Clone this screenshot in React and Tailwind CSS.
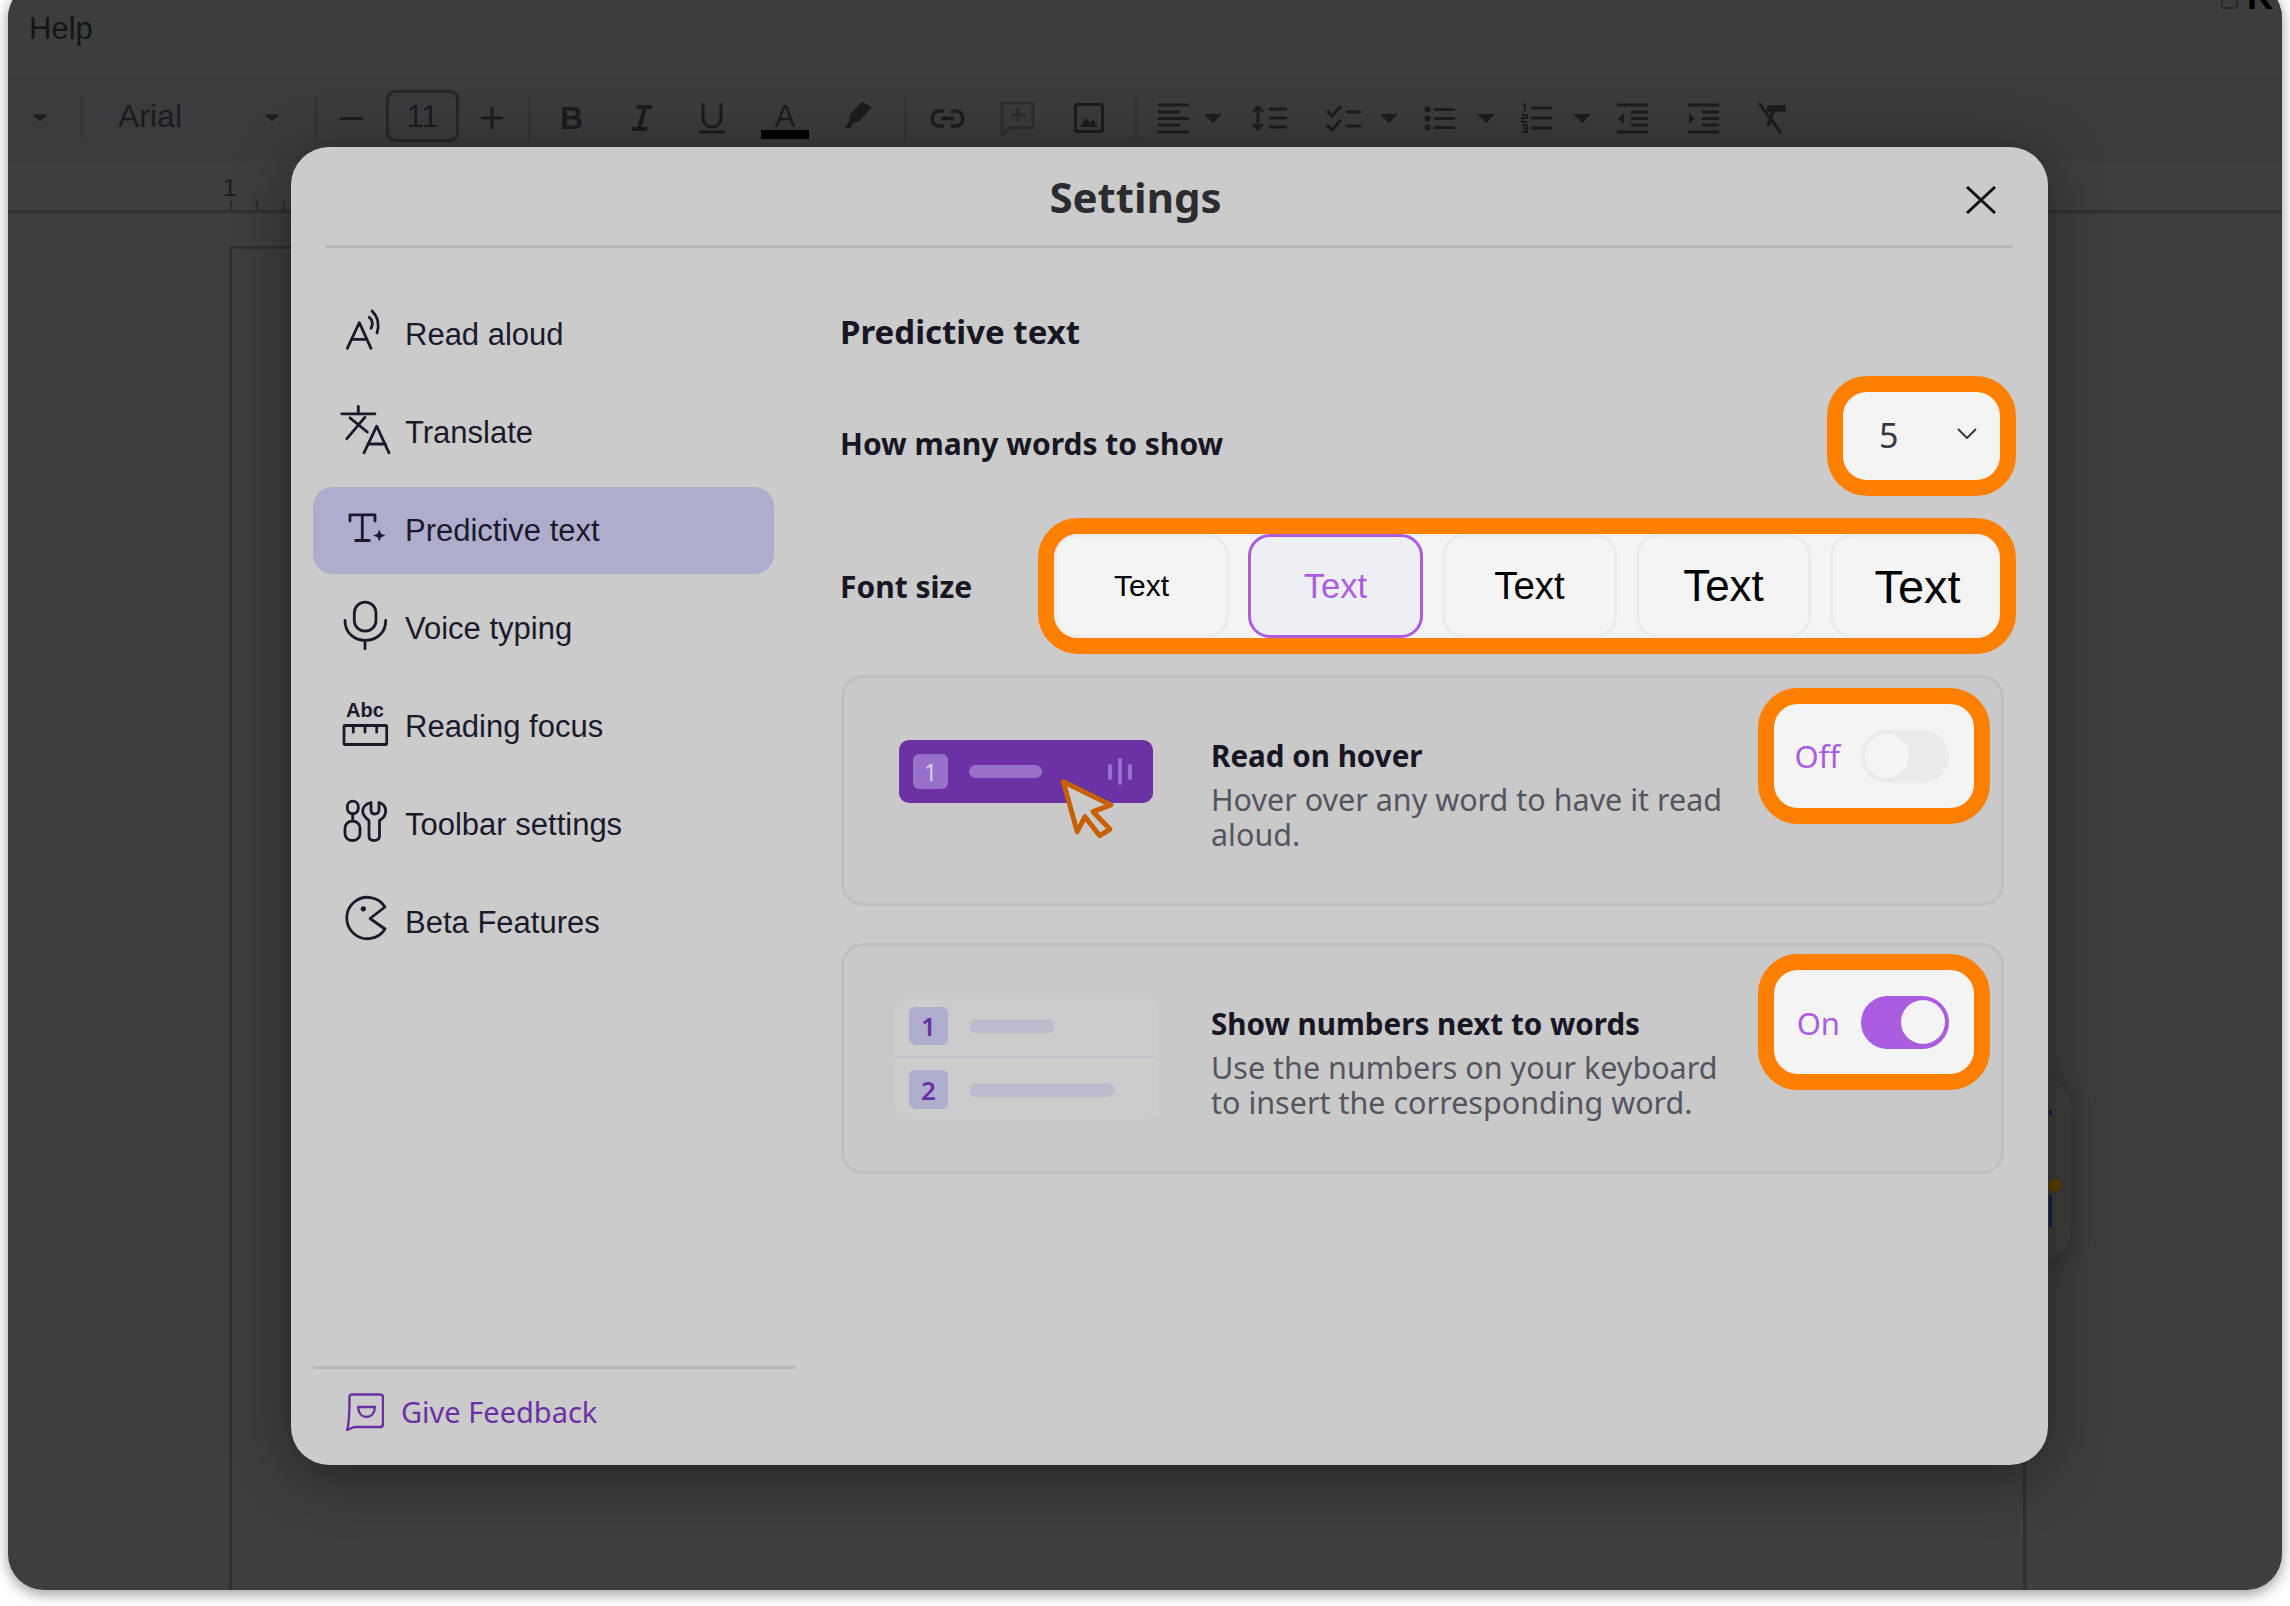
import React from "react";

const Tri = ({ className }) => (
  <svg viewBox="0 0 18 9" className={className}>
    <path d="M0 0H18L9 9Z" fill="#1c1c1c" />
  </svg>
);

const Sep = ({ className }) => <div className={`w-[2px] h-[44px] bg-[#323332] ${className}`} />;

const Lines = ({ rows }) => (
  <>
    {rows.map(([x1, x2, y], i) => (
      <path key={i} d={`M${x1} ${y}H${x2}`} stroke="#1c1c1c" strokeWidth="3" />
    ))}
  </>
);

const Toolbar = () => (
  <div className="h-[86px] bg-[#3a3b3d] flex items-center font-['Liberation_Sans',sans-serif] text-[#1c1c1c]">
    <Tri className="ml-[25px] w-[14px] h-[8px]" />
    <Sep className="ml-[34px]" />
    <span className="ml-[35px] w-[65px] text-[32px] leading-none -mt-[5px]">Arial</span>
    <Tri className="ml-[82px] w-[14px] h-[8px]" />
    <Sep className="ml-[36px]" />
    <div className="ml-[23px] w-[23px] h-[3px] bg-[#1c1c1c]" />
    <div className="ml-[23px] w-[73px] h-[52px] -mt-[4px] rounded-[9px] border-[3px] border-[#262726] flex items-center justify-center text-[31px] leading-none">
      11
    </div>
    <svg viewBox="0 0 22 22" className="ml-[22px] w-[22px] h-[22px]">
      <path d="M11 0V22M0 11H22" stroke="#1c1c1c" strokeWidth="3" />
    </svg>
    <Sep className="ml-[25px]" />
    <span className="ml-[30px] w-[19px] text-[32px] leading-none font-bold">B</span>
    <svg viewBox="0 0 22 26" className="ml-[52px] w-[22px] h-[26px]">
      <path d="M6 2H21M1 24H16M14 2L8 24" stroke="#1c1c1c" strokeWidth="4" fill="none" />
    </svg>
    <svg viewBox="0 0 26 31" className="ml-[46px] w-[26px] h-[31px]">
      <path d="M4 0V15C4 27 22 27 22 15V0" stroke="#1c1c1c" strokeWidth="3" fill="none" />
      <path d="M0 29H26" stroke="#1c1c1c" strokeWidth="3" />
    </svg>
    <div className="ml-[36px] w-[48px] flex flex-col items-center mt-[5px]">
      <span className="text-[31px] leading-[27px]">A</span>
      <div className="w-[48px] h-[9px] bg-black" />
    </div>
    <svg viewBox="0 0 30 27" className="ml-[36px] w-[30px] h-[27px] -mt-[7px]">
      <path d="M0 27L4 20L5 13L17 1L27 6L14 20L8 22L6 27Z" fill="#1c1c1c" />
    </svg>
    <Sep className="ml-[29px]" />
    <svg viewBox="0 0 35 19" className="ml-[24px] w-[35px] h-[19px]">
      <path d="M14 2H9C0 2 0 17 9 17H14M21 2H26C35 2 35 17 26 17H21M11 9.5H24" stroke="#1c1c1c" strokeWidth="3.5" fill="none" />
    </svg>
    <svg viewBox="0 0 35 35" className="ml-[35px] w-[35px] h-[35px]">
      <path d="M2 2H33V27H9L2 34Z" stroke="#2c2d2e" strokeWidth="3" fill="none" />
      <path d="M18 7V21M11 14H25" stroke="#2c2d2e" strokeWidth="3" />
    </svg>
    <svg viewBox="0 0 30 30" className="ml-[39px] w-[30px] h-[30px]">
      <rect x="1.5" y="1.5" width="27" height="27" rx="2" stroke="#1c1c1c" strokeWidth="3" fill="none" />
      <path d="M6 24L12 15L16 20L19 16L24 24Z" fill="#1c1c1c" />
    </svg>
    <Sep className="ml-[31px]" />
    <svg viewBox="0 0 31 31" className="ml-[21px] w-[31px] h-[31px]">
      <Lines rows={[[0, 31, 2], [0, 22, 9], [0, 31, 15.5], [0, 22, 22], [0, 31, 29]]} />
    </svg>
    <Tri className="ml-[15px] w-[18px] h-[9px]" />
    <svg viewBox="0 0 35 26" className="ml-[30px] w-[35px] h-[26px]">
      <Lines rows={[[17, 35, 4], [17, 35, 13], [17, 35, 22]]} />
      <path d="M6 3V23M1 7L6 2L11 7M1 19L6 24L11 19" stroke="#1c1c1c" strokeWidth="3" fill="none" />
    </svg>
    <svg viewBox="0 0 35 27" className="ml-[39px] w-[35px] h-[27px]">
      <path d="M1 6L6 11L15 1M1 20L6 25L15 15" stroke="#1c1c1c" strokeWidth="3" fill="none" />
      <Lines rows={[[20, 35, 7], [20, 35, 21]]} />
    </svg>
    <Tri className="ml-[19px] w-[18px] h-[9px]" />
    <svg viewBox="0 0 31 25" className="ml-[26px] w-[31px] h-[25px]">
      <circle cx="3.5" cy="3.5" r="3" fill="#1c1c1c" />
      <circle cx="3.5" cy="12.5" r="3" fill="#1c1c1c" />
      <circle cx="3.5" cy="21.5" r="3" fill="#1c1c1c" />
      <Lines rows={[[10, 31, 3.5], [10, 31, 12.5], [10, 31, 21.5]]} />
    </svg>
    <Tri className="ml-[22px] w-[18px] h-[9px]" />
    <svg viewBox="0 0 31 30" className="ml-[26px] w-[31px] h-[30px]">
      <path d="M1 2L4 1V9M1 12H6V15H1V19H6M1 22H6V29H1M2 25.5H6" stroke="#1c1c1c" strokeWidth="1.8" fill="none" />
      <Lines rows={[[10, 31, 5], [10, 31, 15], [10, 31, 25]]} />
    </svg>
    <Tri className="ml-[21px] w-[18px] h-[9px]" />
    <svg viewBox="0 0 31 31" className="ml-[26px] w-[31px] h-[31px]">
      <Lines rows={[[0, 31, 2], [14, 31, 9], [14, 31, 15.5], [14, 31, 22], [0, 31, 29]]} />
      <path d="M7 10V21L1 15.5Z" fill="#1c1c1c" />
    </svg>
    <svg viewBox="0 0 31 31" className="ml-[40px] w-[31px] h-[31px]">
      <Lines rows={[[0, 31, 2], [14, 31, 9], [14, 31, 15.5], [14, 31, 22], [0, 31, 29]]} />
      <path d="M1 10V21L7 15.5Z" fill="#1c1c1c" />
    </svg>
    <svg viewBox="0 0 31 32" className="ml-[38px] w-[31px] h-[32px]">
      <path d="M2 1L24 31" stroke="#1c1c1c" strokeWidth="3" fill="none" />
      <path d="M10 8H27V5H10M17 6L11 24" stroke="#1c1c1c" strokeWidth="3.5" fill="none" />
    </svg>
  </div>
);

const icons = {
  read: (
    <>
      <path d="M6.3 37.3L18.3 11.7L30 37.3M10.5 28.3H26" />
      <path d="M31 0C38 7 38 16 36 22M28.3 6.3C32 9 32 14 30 17.3" />
    </>
  ),
  translate: (
    <>
      <path d="M.7 4.8H34M17.3-2.5V4.8M24 8.2L5.7 29.8M9 8.8L26.3 23" />
      <path d="M23 43.8L35.7 17.2L48 43.8M26.8 35H44.5" />
    </>
  ),
  predictive: (
    <>
      <path d="M9 14V7.8H34V14M21.3 7.8V33.5M14.7 33.5H28.3" />
      <path d="M38.3 22.5L40 26.8L44.3 28.5L40 30.2L38.3 34.5L36.6 30.2L32.3 28.5L36.6 26.8Z" fill="#1b1a2b" stroke="none" />
    </>
  ),
  voice: (
    <>
      <rect x="13.3" y="-2.8" width="21.7" height="29" rx="10.8" />
      <path d="M4 15.5C4 42 44.7 42 44.7 15.5M24 35.5V43.8" />
    </>
  ),
  reading: (
    <>
      <text x="24" y="13.5" textAnchor="middle" fontSize="20" fontWeight="700" fill="#1b1a2b" stroke="none" fontFamily="'Liberation Sans', sans-serif">
        Abc
      </text>
      <rect x="3" y="22.5" width="42.7" height="19" rx="1" />
      <path d="M12.3 22.5V29.2M24 22.5V29.2M35.7 22.5V29.2" />
    </>
  ),
  toolbar: (
    <>
      <rect x="6.3" y=".2" width="11" height="12.6" rx="5.5" />
      <path d="M11.7 12.8V20.2" />
      <rect x="4" y="20.2" width="15" height="19.3" rx="7" />
      <path d="M30 1.5C24 3 21.7 7 21.7 10C21.7 15 26 18 28 19.5V35C28 38 30 39.5 33 39.5C36 39.5 38.5 38 38.5 35V19.5C41 18 44.7 15 44.7 10C44.7 7 43 3 38 1.5V9C38 12 36 13 33.3 13C31 13 30 12 30 9Z" />
    </>
  ),
  beta: (
    <>
      <path d="M44 8A20.7 20.7 0 1 0 44 30L29 19.5Z" />
      <circle cx="22.3" cy="9.8" r="2.6" fill="#1b1a2b" stroke="none" />
    </>
  ),
};

const NavItem = ({ icon, label, active }) => (
  <div className={`w-[461px] h-[87px] flex items-center rounded-[20px] ${active ? "bg-[#aeadcd]" : ""}`}>
    <svg viewBox="0 0 48 48" className="ml-[28px] w-[48px] h-[48px] overflow-visible" fill="none" stroke="#1b1a2b" strokeWidth="2.8" strokeLinejoin="round" strokeLinecap="round">
      {icons[icon]}
    </svg>
    <span className="ml-[16px] -mt-[1px] text-[31px] leading-none text-[#1b1a2b] font-['Liberation_Sans',sans-serif]">{label}</span>
  </div>
);

const Toggle = ({ on }) => (
  <div className="shrink-0 ml-auto w-[232px] h-[136px] rounded-[40px] border-[16px] border-[#ff8000] bg-[#f4f4f4] flex items-center justify-end gap-[21px] pr-[25px]">
    <span className={`text-[31px] leading-none text-[#ab5de0] ${on ? "mt-[2px]" : ""}`}>{on ? "On" : "Off"}</span>
    <div className={`w-[88px] h-[53px] rounded-full p-[4px] flex items-center ${on ? "bg-[#ab5de0] justify-end" : "bg-[#ebebeb] justify-start"}`}>
      <div className="w-[44px] h-[44px] rounded-full bg-[#f4f4f4]" />
    </div>
  </div>
);

const CardText = ({ title, first, second, className }) => (
  <div className={className}>
    <div className="text-[29.6px] leading-[35px] font-bold text-[#171622] whitespace-nowrap">{title}</div>
    <p className="mt-[9px] text-[30.5px] leading-[35px] text-[#55555f] whitespace-nowrap">
      {first}
      <br />
      {second}
    </p>
  </div>
);

const sizes = ["text-[30px]", "text-[34.5px]", "text-[38.5px]", "text-[44px]", "text-[47px]"];

const Settings = () => (
  <div className="absolute left-[283px] top-[165px] w-[1757px] h-[1318px] rounded-[38px] bg-[#cbcbcb] shadow-[0_10px_60px_rgba(0,0,0,0.45)] flex flex-col font-['Noto_Sans',sans-serif]">
    <div className="relative mx-[35px] h-[101px] shrink-0 border-b-[3px] border-[#b8b8b8] flex items-center justify-center pr-[68px]">
      <h1 className="text-[42px] leading-none font-bold text-[#2b2b30] mt-[1px]">Settings</h1>
      <svg viewBox="0 0 30 28" className="absolute right-[17px] top-[39px] w-[30px] h-[28px]">
        <path d="M1 1L29 27M29 1L1 27" stroke="#111" strokeWidth="3" />
      </svg>
    </div>
    <div className="flex flex-1 min-h-0 pl-[22px]">
      <div className="w-[483px] flex flex-col pt-[43px]">
        <div className="flex flex-col gap-[11px]">
          <NavItem icon="read" label="Read aloud" />
          <NavItem icon="translate" label="Translate" />
          <NavItem icon="predictive" label="Predictive text" active />
          <NavItem icon="voice" label="Voice typing" />
          <NavItem icon="reading" label="Reading focus" />
          <NavItem icon="toolbar" label="Toolbar settings" />
          <NavItem icon="beta" label="Beta Features" />
        </div>
        <div className="mt-auto h-[99px] border-t-[3px] border-[#b8b8b8] flex items-start pl-[33px] pt-[24px]">
          <svg viewBox="0 0 38 38" className="w-[38px] h-[38px]" fill="none" stroke="#6b30a3" strokeWidth="2.4" strokeLinejoin="round">
            <path d="M6 1.5H34Q37 1.5 37 4.5V31Q37 34 34 34H8L1 37Q3.5 30 3.5 4Q3.5 1.5 6 1.5Z" />
            <path d="M12 14H29Q28 24 20.5 24Q13 24 12 14Z" />
          </svg>
          <span className="ml-[17px] -mt-[1px] text-[29px] leading-[40px] text-[#6b30a3]">Give Feedback</span>
        </div>
      </div>
      <div className="ml-[44px] w-[1176px] pt-[64px] text-[#171622]">
        <h2 className="h-[40px] text-[33px] leading-[40px] font-bold">Predictive text</h2>
        <div className="mt-[24px] flex items-start justify-between">
          <span className="mt-[48px] text-[30px] leading-[40px] font-bold">How many words to show</span>
          <div className="w-[189px] h-[120px] rounded-[40px] border-[16px] border-[#ff8000] bg-[#f4f4f4] flex items-center justify-between pl-[36px] pr-[23px]">
            <span className="text-[34px] leading-none -mt-[2px] text-[#383848]">5</span>
            <svg viewBox="0 0 20 11" className="w-[20px] h-[11px] -mt-[5px]">
              <path d="M1 1L10 10L19 1" fill="none" stroke="#383848" strokeWidth="2" />
            </svg>
          </div>
        </div>
        <div className="mt-[22px] flex items-center justify-between">
          <span className="text-[30px] leading-[40px] font-bold mt-[1px]">Font size</span>
          <div className="w-[978px] h-[136px] rounded-[40px] border-[16px] border-[#ff8000] bg-[#f4f4f4] flex gap-[19px] overflow-hidden">
            {sizes.map((s, i) => (
              <div
                key={s}
                className={`w-[175px] shrink-0 rounded-[22px] border-[3px] flex items-center justify-center font-['Liberation_Sans',sans-serif] leading-none ${s} ${
                  i === 1 ? "border-[#ab5de0] bg-[#eeeff4] text-[#ab5de0]" : "border-[#ebebeb] text-black"
                }`}
              >
                Text
              </div>
            ))}
          </div>
        </div>
        <div className="mt-[21px] ml-[1px] w-[1163px] h-[231px] rounded-[22px] border-[3px] border-[#bfbfbf] bg-[#c9c9c9] flex items-start pt-[10px] pr-[11px]">
          <div className="relative shrink-0 ml-[55px] mt-[52px] w-[254px] h-[63px] rounded-[10px] bg-[#6c31a3] flex items-center pl-[14px]">
            <div className="w-[35px] h-[35px] rounded-[6px] bg-[#9670cb] flex items-center justify-center text-[24px] leading-none text-[#d6cbe6]">1</div>
            <div className="ml-[21px] w-[73px] h-[13px] rounded-full bg-[#9670cb]" />
            <div className="ml-[66px] flex items-center gap-[6px]">
              <div className="w-[4px] h-[16px] rounded-full bg-[#9670cb]" />
              <div className="w-[4px] h-[27px] rounded-full bg-[#9670cb]" />
              <div className="w-[4px] h-[16px] rounded-full bg-[#9670cb]" />
            </div>
            <svg viewBox="0 0 58 64" className="absolute left-[159px] top-[36px] w-[58px] h-[64px]">
              <path d="M5.3 5.7L52.8 29L35 35.7L52 53.3L41.7 59.7L27 40.7L19.2 55.7Z" fill="#cbcbcb" stroke="#c96000" strokeWidth="5" strokeLinejoin="round" />
            </svg>
          </div>
          <CardText className="ml-[58px] mt-[50px]" title="Read on hover" first="Hover over any word to have it read" second="aloud." />
          <Toggle />
        </div>
        <div className="mt-[37px] ml-[1px] w-[1163px] h-[231px] rounded-[22px] border-[3px] border-[#bfbfbf] bg-[#c9c9c9] flex items-start pt-[8px] pr-[11px]">
          <div className="shrink-0 ml-[51px] mt-[43px] w-[263px] h-[123px] rounded-[14px] bg-[#cccccc] flex flex-col text-[26px] font-semibold text-[#6b30a3]">
            <div className="h-[61px] flex items-center pl-[14px] pb-[2px] border-b-[2px] border-[#c3c3d0]">
              <div className="w-[39px] h-[38px] rounded-[6px] bg-[#aeadcd] flex items-center justify-center leading-none">1</div>
              <div className="ml-[21px] w-[86px] h-[14px] rounded-full bg-[#bdbccd]" />
            </div>
            <div className="h-[62px] flex items-center pl-[14px] pt-[1px]">
              <div className="w-[39px] h-[39px] rounded-[6px] bg-[#aeadcd] flex items-center justify-center leading-none">2</div>
              <div className="ml-[21px] w-[146px] h-[14px] rounded-full bg-[#bdbccd]" />
            </div>
          </div>
          <CardText className="ml-[53px] mt-[52px]" title="Show numbers next to words" first="Use the numbers on your keyboard" second="to insert the corresponding word." />
          <Toggle on />
        </div>
      </div>
    </div>
  </div>
);

export default function App() {
  return (
    <div className="w-[2290px] h-[1606px] bg-white overflow-hidden">
      <div className="relative ml-[8px] -mt-[18px] w-[2274px] h-[1608px] rounded-[36px] bg-[#3d3e3d] overflow-hidden shadow-[0_4px_14px_rgba(0,0,0,0.4)] flex flex-col">
        <div className="h-[93px] shrink-0 pl-[21px] pt-[32px] bg-[#3c3e3d] text-[31px] leading-[30px] text-[#141514] font-['Liberation_Sans',sans-serif]">
          Help
        </div>
        <div className="absolute right-[44px] top-[6px] w-[17px] h-[21px] rounded-[3px] border-[2px] border-[#2a2a2a]" />
        <span className="absolute right-[9px] top-[-3px] text-[36px] leading-none font-bold text-black font-['Liberation_Sans',sans-serif]">K</span>
        <Toolbar />
        <div className="relative h-[52px] shrink-0 border-b-[3px] border-[#303130] font-['Liberation_Sans',sans-serif] text-[#1c1c1c] flex items-end pl-[222px]">
          <span className="absolute left-[215px] top-[15px] text-[24px] leading-none">1</span>
          <div className="w-[2px] h-[9px] bg-[#2a2a2a]" />
          <div className="ml-[24px] w-[2px] h-[9px] bg-[#2a2a2a]" />
          <div className="ml-[25px] w-[2px] h-[9px] bg-[#2a2a2a]" />
        </div>
        <div className="flex-1 pt-[33px] pl-[221px] pr-[256px]">
          <div className="h-full border-[3px] border-b-0 border-[#2f302f]" />
        </div>
        <div className="absolute left-[1892px] top-[1094px] w-[171px] h-[185px] rounded-[30px] bg-[#3d3e3d] shadow-[0_4px_20px_rgba(0,0,0,0.25)] flex flex-col items-end pr-[9px] pt-[103px]">
          <div className="absolute left-[149px] top-[34px] w-[3px] h-[5px] bg-[#0e2350]" />
          <div className="absolute left-[149px] top-[119px] w-[3px] h-[32px] bg-[#0e2350]" />
          <div className="w-[14px] h-[13px] rounded-full bg-[#5e4100]" />
        </div>
        <Settings />
      </div>
    </div>
  );
}
